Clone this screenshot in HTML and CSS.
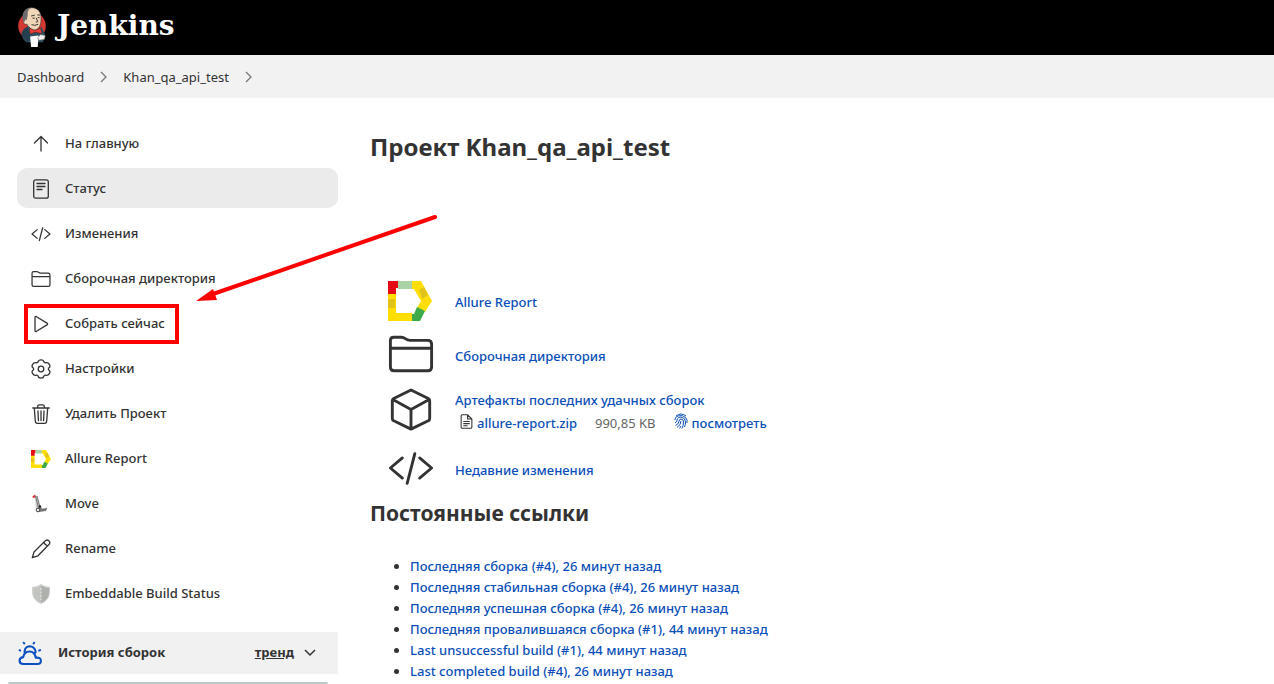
FILE: index.html
```
<!DOCTYPE html>
<html lang="ru">
<head>
<meta charset="utf-8">
<title>Khan_qa_api_test [Jenkins]</title>
<link rel="stylesheet" href="styles.css">
</head>
<body>
<svg class="defs" aria-hidden="true">
  <symbol id="code" viewBox="0 0 48 48"><path d="M15 13.500 2.500 24 15 34.500M33 13.500 45.500 24 33 34.500M28 9 20 40" fill="none" stroke="currentColor" stroke-width="3" stroke-linecap="round" stroke-linejoin="round"/></symbol>
  <symbol id="folder" viewBox="0 0 48 48"><path d="M2.500 37.500V10Q2.500 6.500 6 6.500h8q2 0 4 1.500 2.500 1.800 5 1.800h18.500q4 0 4 4v23.700q0 4-4 4H6.500q-4 0-4-4zM2.500 18h43" fill="none" stroke="currentColor" stroke-width="3" stroke-linejoin="round"/></symbol>
  <symbol id="allure" viewBox="0 0 44 40"><path d="M0 12h8v20h16l3 8H0z" fill="#ffde05"/><path d="M0 0h10v7H8v6H0z" fill="#e60a14"/><path d="M10 0h14v8H10z" fill="#a9d3a4"/><path d="M24 0h9l11 20-7 11-8-4 4-7-7-12h-2z" fill="#ffde05"/><path d="M0 18h7v9H0zM31 9l5-3 4 8-6 4z" fill="#e0c219"/><path d="m29 26 8 4-5 10h-8v-7h2z" fill="#3dab47"/></symbol>
</svg>

<header class="header">
  <a class="logo" href="#">
    <svg class="butler" viewBox="0 0 30 42" aria-hidden="true">
      <ellipse cx="15" cy="20" rx="14.500" ry="14.500" fill="#d33833"/>
      <path d="M6 15C4 8 7 1 14 .8c7-.5 11 5 10.500 11.500 0 7-2.500 12-7.500 12-4 0-6-3-7-6-3 0-4-1-4-3.300z" fill="#f0d6b7" stroke="#333" stroke-width=".6"/>
      <path d="M5.500 14C4 7 7 1.500 14 .8c-3.500 2.500-3.500 4-3.500 7.500L9.500 14l-1.500-1-1 3z" fill="#6d6b6d"/>
      <path d="m14 9.500 4-1m2.500-.2 3 .2m-8 3.200h2.500m3-.5h2m-3.500.3 1.500 4-2 .5m-4.500 2.500q3 1.500 7-.2" stroke="#333" fill="none"/>
      <path d="M4 26 11 20l7 6 7-5 3.500 7-2 9H9Q4 33 4 26z" fill="#335061"/>
      <path d="M4 29q1-6 6-8l4 12-4 4z" fill="#263f4e"/>
      <path d="m12 22 6 2.500 6-2.500 1.500 6-7-1.500-5.500 2z" fill="#ef3d3a" stroke="#222" stroke-width=".5"/>
      <path d="m13 31 9-1-1 12h-7z" fill="#fff"/>
      <path d="m21 32 3-3 5 1-1 4-6 1z" fill="#eee" stroke="#555" stroke-width=".5"/>
    </svg>
    <span class="logo-name">Jenkins</span>
  </a>
</header>

<nav class="crumbs" aria-label="Breadcrumb">
  <a href="#">Dashboard</a>
  <svg class="chevron" viewBox="0 0 7 12" aria-hidden="true"><path d="m1 1 5 5-5 5"/></svg>
  <a href="#">Khan_qa_api_test</a>
  <svg class="chevron" viewBox="0 0 7 12" aria-hidden="true"><path d="m1 1 5 5-5 5"/></svg>
</nav>

<div class="page">
  <aside class="side">
    <nav class="tasks">
      <a class="task" href="#"><svg class="task-icon line" viewBox="0 0 20 20"><path d="M10 17V3M3.500 9 10 2.500 16.500 9"/></svg>На главную</a>
      <a class="task active" href="#"><svg class="task-icon line" viewBox="0 0 20 20"><rect x="2.700" y=".8" width="14.600" height="18.400" rx="2"/><path d="M6 4.500h8M6 7.500h8M6 10.500h5"/></svg>Статус</a>
      <a class="task" href="#"><svg class="task-icon"><use href="#code"/></svg>Изменения</a>
      <a class="task" href="#"><svg class="task-icon"><use href="#folder"/></svg>Сборочная директория</a>
      <a class="task marked" href="#"><svg class="task-icon line" viewBox="0 0 20 20"><path d="M4 3.500v13q0 1.500 1.500.8l10.500-6.400q1.200-.9 0-1.800L5.500 2.700Q4 2 4 3.500z"/></svg>Собрать сейчас</a>
      <a class="task" href="#"><svg class="task-icon line" viewBox="0 0 20 20"><circle cx="10" cy="10" r="2.800"/><path d="M10 .8c1.800 0 2.600.5 2.900 2 .3 1 1 1.300 2 .9 1.700-.5 2.700.3 3.600 1.900.7 1.300.7 2.300-.5 3.200-.8.700-.8 1.700 0 2.400 1.200.9 1.200 1.900.5 3.200-.9 1.600-1.900 2.400-3.600 1.900-1-.4-1.700-.1-2 .9-.3 1.500-1.100 2-2.900 2s-2.600-.5-2.900-2c-.3-1-1-1.300-2-.9-1.700.5-2.700-.3-3.600-1.900-.7-1.300-.7-2.300.5-3.200.8-.7.800-1.700 0-2.400C.8 7.900.8 6.900 1.500 5.600c.9-1.600 1.900-2.400 3.600-1.900 1 .4 1.700.1 2-.9.300-1.500 1.100-2 2.900-2z"/></svg>Настройки</a>
      <a class="task" href="#"><svg class="task-icon line" viewBox="0 0 20 20"><path d="M1.800 4h16.400M3.300 4l1 13q.2 2.300 2 2.300h7.400q1.800 0 2-2.300l1-13M6.700 4V2.500Q6.700.9 8.300.9h3.400q1.600 0 1.600 1.600V4M7 7l.4 9.500M10 7v9.500M13 7l-.4 9.500"/></svg>Удалить Проект</a>
      <a class="task" href="#"><svg class="task-icon allure"><use href="#allure"/></svg>Allure Report</a>
      <a class="task" href="#"><svg class="task-icon" viewBox="0 0 20 20"><path d="m1 3 3-2.500L6 3 3 4z" fill="#d33"/><path d="m4 1 2 1 3 12 6 0 1-1 0 3-7 2-4-1z" fill="#c9cac9"/><path d="m4.500 2 3 12M6 2l3 11" stroke="#666" stroke-width=".9"/><path d="m7 13 3 0 1 2 5-1-1 3-8 1z" fill="#777"/><circle cx="7" cy="16" r="1.800" fill="#eee" stroke="#444" stroke-width="1"/><circle cx="9" cy="12.500" r="1.200" fill="#222"/></svg>Move</a>
      <a class="task" href="#"><svg class="task-icon line" viewBox="0 0 20 20"><path d="M1.300 18.700 3 13 13.800 2.300q1.900-2.200 4-.5t-.1 4L7 16.800zM12.800 3.400q1.600 3.200 3.900 3.500"/></svg>Rename</a>
      <a class="task" href="#"><svg class="task-icon" viewBox="0 0 20 20"><path d="M10 0Q6 3 1 3q-.5 7 1.500 11Q5 18 10 20q5-2 7.500-6Q19.500 10 19 3q-5 0-9-3z" fill="#cfd0cd"/><path d="M10 1.500Q14 4 18 4q.5 7-2 10.500-2 2.500-6 4.300z" fill="#aeb0ac"/><path d="M10 2Q7 4 2.500 4.500 2 10 4 14q2 3 6 4.600z" fill="#c1c3bf"/><path d="M10 4v12" stroke="#eee" stroke-dasharray="2 1.500"/></svg>Embeddable Build Status</a>
    </nav>
    <section class="history">
      <svg class="weather" viewBox="0 0 24 24" aria-hidden="true"><path d="M5 22q-3.500 0-3.500-3T5 15.500Q6 10 11 10t6 6q5-.5 5 3t-4 3zM6.500 12.500q-1-7 4.500-7.500 5 0 6 5.500l-1.500 2" fill="none" stroke="#0b4fc0" stroke-width="2" stroke-linejoin="round"/><path d="m5 1 1.500 2M16 1l-1.500 2M.8 8.500l2 1M22 8.500l-2.500 1" stroke="#0b4fc0" stroke-width="1.800"/></svg>
      <strong class="history-title">История сборок</strong>
      <a class="trend" href="#">тренд</a>
      <button class="toggle" type="button" aria-label="Свернуть"><svg viewBox="0 0 12 8"><path d="m1 1 5 5 5-5"/></svg></button>
    </section>
    <div class="build-list"></div>
  </aside>

  <main class="main">
    <h1>Проект Khan_qa_api_test</h1>
    <div class="summary">
      <div class="row"><svg class="row-icon badge"><use href="#allure"/></svg><a href="#">Allure Report</a></div>
      <div class="row"><svg class="row-icon"><use href="#folder"/></svg><a href="#">Сборочная директория</a></div>
      <div class="row medium">
        <svg class="row-icon" viewBox="0 0 48 48"><path d="M24 4.200 42 13q1.500 1 1.500 2.500v18.300q0 1.500-1.500 2.500L24 45 6 36.300q-1.500-1-1.500-2.500V15.500Q4.500 14 6 13zM5 14l19 10.500L43 14M24 24.500V44" fill="none" stroke="currentColor" stroke-width="3" stroke-linejoin="round"/></svg>
        <div class="artifacts">
          <a href="#">Артефакты последних удачных сборок</a>
          <div class="files">
            <svg class="file" viewBox="0 0 12 14" aria-hidden="true"><path d="M2 .7h5l4 4v7.600q0 1-1 1H2q-1 0-1-1V1.700q0-1 1-1zM7 .7v4h4M3 7h6M3 9h6M3 11h4"/></svg>
            <a href="#">allure-report.zip</a>
            <span class="size">990,85 KB</span>
            <svg class="print" viewBox="0 0 14 16" aria-hidden="true"><path d="M2 3Q7-1 12 3M.8 7Q1 3.500 4.500 2.800 9 1.500 12 5q1.500 2 1 5M1 10q2-1 2-3 1-3.500 5-2.700 3.500 1 3.500 4.700 0 3-1 5M1.500 12.500Q5 11 5 8q.5-2 2-2 2.500 0 2.500 3 0 3.500-1.500 6.500M3 14.500Q7 12 7 8M5.500 15.500 7 13"/></svg>
            <a href="#">посмотреть</a>
          </div>
        </div>
      </div>
      <div class="row tall"><svg class="row-icon"><use href="#code"/></svg><a href="#">Недавние изменения</a></div>
    </div>
    <h2>Постоянные ссылки</h2>
    <ul class="permalinks">
      <li><a href="#">Последняя сборка (#4), 26 минут назад</a></li>
      <li><a href="#">Последняя стабильная сборка (#4), 26 минут назад</a></li>
      <li><a href="#">Последняя успешная сборка (#4), 26 минут назад</a></li>
      <li><a href="#">Последняя провалившаяся сборка (#1), 44 минут назад</a></li>
      <li><a href="#">Last unsuccessful build (#1), 44 минут назад</a></li>
      <li><a href="#">Last completed build (#4), 26 минут назад</a></li>
    </ul>
  </main>
  <svg class="arrow" viewBox="0 0 244 92" aria-hidden="true"><path d="M239 4 17 81" stroke="#f00" stroke-width="4" stroke-linecap="round"/><path d="m0 88 17-12 4 11z" fill="#f00"/></svg>
</div>
</body>
</html>
```

FILE: styles.css
```
*, *::after { box-sizing: border-box; }
body {
  margin: 0;
  background: #fff;
  color: #333;
  font: 500 13px/21px "Noto Sans", "Open Sans", sans-serif;
}
a { color: #0b4fb8; text-decoration: none; }
svg { flex: none; }
.defs { position: absolute; width: 0; height: 0; }

.header { height: 55px; background: #000; padding: 0 17px; }
.logo { display: inline-flex; align-items: center; gap: 10px; height: 53px; color: #fff; }
.butler { width: 30px; height: 40px; }
.logo-name { font: bold 28px/34px "DejaVu Serif", serif; padding-bottom: 2px; }

.crumbs {
  display: flex;
  align-items: center;
  gap: 16px;
  height: 43px;
  padding: 0 17px;
  background: #f2f2f2;
}
.crumbs a { color: #333; font-weight: 400; padding-top: 1px; }
.chevron { width: 7px; height: 12px; fill: none; stroke: #777; stroke-width: 1.3; }

.page { position: relative; display: flex; }
.side { flex: 0 0 338px; padding-top: 25px; }
.tasks { display: flex; flex-direction: column; gap: 5px; padding-left: 17px; }
.task {
  position: relative;
  display: flex;
  align-items: center;
  gap: 14px;
  height: 40px;
  padding: 1px 14px 0;
  border-radius: 10px;
  color: #333;
}
.task-icon { width: 20px; height: 20px; }
.line { fill: none; stroke: #333; stroke-width: 1.3; stroke-linecap: round; stroke-linejoin: round; }
.active { background: #ebebeb; }
.marked::after {
  content: "";
  position: absolute;
  inset: 1px auto -1px 7px;
  width: 155px;
  border: 4px solid #f00;
}

.history {
  display: flex;
  align-items: center;
  height: 42px;
  margin-top: 19px;
  padding: 0 20px 0 18px;
  background: #f1f1f1;
}
.weather { width: 25px; height: 25px; }
.history-title { flex: 1; margin-left: 15px; padding-bottom: 2px; }
.trend { color: #333; font-weight: 700; text-decoration: underline; padding-bottom: 2px; }
.toggle { width: 16px; height: 20px; margin-left: 8px; padding: 0; border: 0; background: none; }
.toggle svg { display: block; width: 12px; height: 8px; margin: auto; fill: none; stroke: #333; stroke-width: 1.5; }
.build-list { height: 2px; margin: 8px 10px 0 8px; border-radius: 2px 2px 0 0; background: #bac9c8; }

.main { flex: 1; padding: 32px 32px 0; }
h1, h2 { margin: 0; font-weight: 700; }
h1 { font-size: 24px; line-height: 34px; }
h2 { font-size: 21px; line-height: 26px; }
.summary { margin-top: 111px; padding-left: 17px; }
.row { display: flex; align-items: center; gap: 20px; height: 54px; }
.medium { height: 57px; }
.tall { height: 60px; }
.row-icon { width: 48px; height: 46px; margin-bottom: 5px; }
.badge { width: 46px; height: 40px; margin: 0 2px 2px 0; }
.files { display: flex; align-items: center; gap: 4px; padding-left: 5px; margin-top: 2px; }
.file { width: 13px; height: 15px; margin-bottom: 3px; fill: none; stroke: #333; }
.print { width: 14px; height: 16px; margin-bottom: 5px; fill: none; stroke: #0b4fb8; }
.size { margin: 0 14px; color: #666; font-weight: 400; }
.permalinks { margin: 30px 0 0; padding-left: 40px; }

.arrow { position: absolute; left: 196px; top: 115px; width: 244px; height: 92px; }
```
